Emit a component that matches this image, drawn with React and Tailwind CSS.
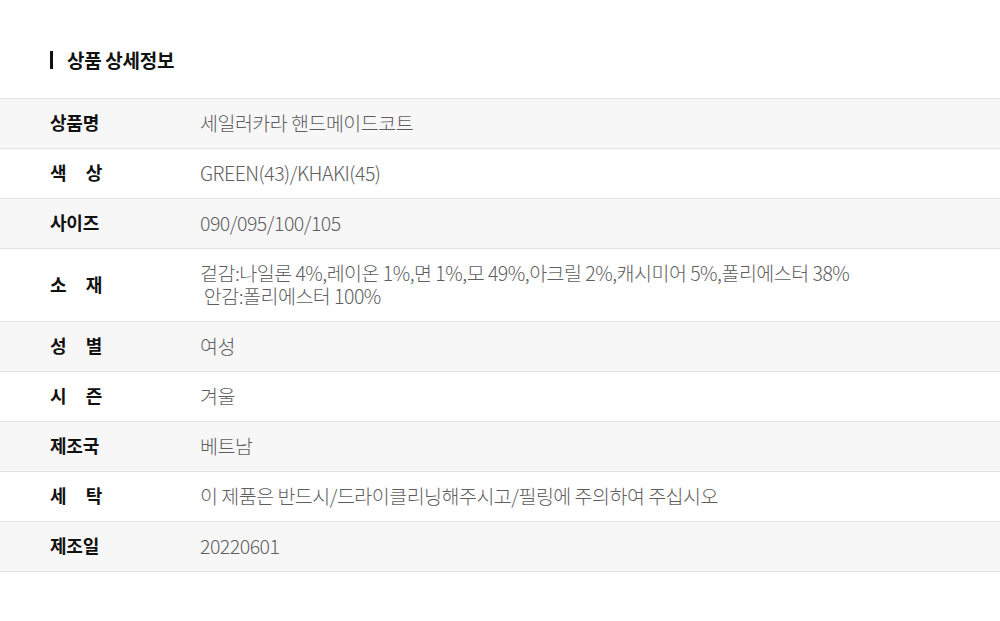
import React from 'react';

const rows = [
  { label: ['상품명'], value: ['세일러카라 핸드메이드코트'] },
  { label: ['색', '상'], value: ['GREEN(43)/KHAKI(45)'] },
  { label: ['사이즈'], value: ['090/095/100/105'] },
  {
    label: ['소', '재'],
    value: ['겉감:나일론 4%,레이온 1%,면 1%,모 49%,아크릴 2%,캐시미어 5%,폴리에스터 38%', ' 안감:폴리에스터 100%'],
  },
  { label: ['성', '별'], value: ['여성'] },
  { label: ['시', '즌'], value: ['겨울'] },
  { label: ['제조국'], value: ['베트남'] },
  { label: ['세', '탁'], value: ['이 제품은 반드시/드라이클리닝해주시고/필링에 주의하여 주십시오'] },
  { label: ['제조일'], value: ['20220601'] },
];

function Label({ parts }) {
  if (parts.length === 1) {
    return <span>{parts[0]}</span>;
  }
  return (
    <span className="flex w-[52px] justify-between">
      {parts.map((p) => (
        <span key={p}>{p}</span>
      ))}
    </span>
  );
}

export default function App() {
  return (
    <div
      className="min-h-screen bg-white pt-[50px]"
      style={{ fontFamily: '"Noto Sans CJK KR", "Noto Sans", sans-serif' }}
    >
      {/* Title */}
      <div className="flex items-center gap-[14px] px-[50px]">
        <span className="h-[18px] w-[3px] bg-[#111]" />
        <h2 className="text-[19px] font-bold leading-[20px] tracking-[-0.3px] text-[#111]">상품 상세정보</h2>
      </div>

      {/* Detail table */}
      <div className="mt-[28px] border-t border-[#e2e2e2]">
        {rows.map((row, i) => (
          <div
            key={i}
            className={`flex border-b border-[#e2e2e2] pt-[12px] pb-[14px] ${i % 2 === 0 ? 'bg-[#f7f7f7]' : 'bg-white'}`}
          >
            <div className="flex w-[200px] shrink-0 items-center pl-[50px] text-[18px] font-bold leading-[23px] tracking-[-0.2px] text-[#111]">
              <Label parts={row.label} />
            </div>
            <div className="flex flex-col text-[19.5px] font-light leading-[23px] tracking-[-0.5px] text-[#5e5e5e]">
              {row.value.map((v, j) => (
                <span key={j} className="whitespace-pre">
                  {v}
                </span>
              ))}
            </div>
          </div>
        ))}
      </div>
    </div>
  );
}
